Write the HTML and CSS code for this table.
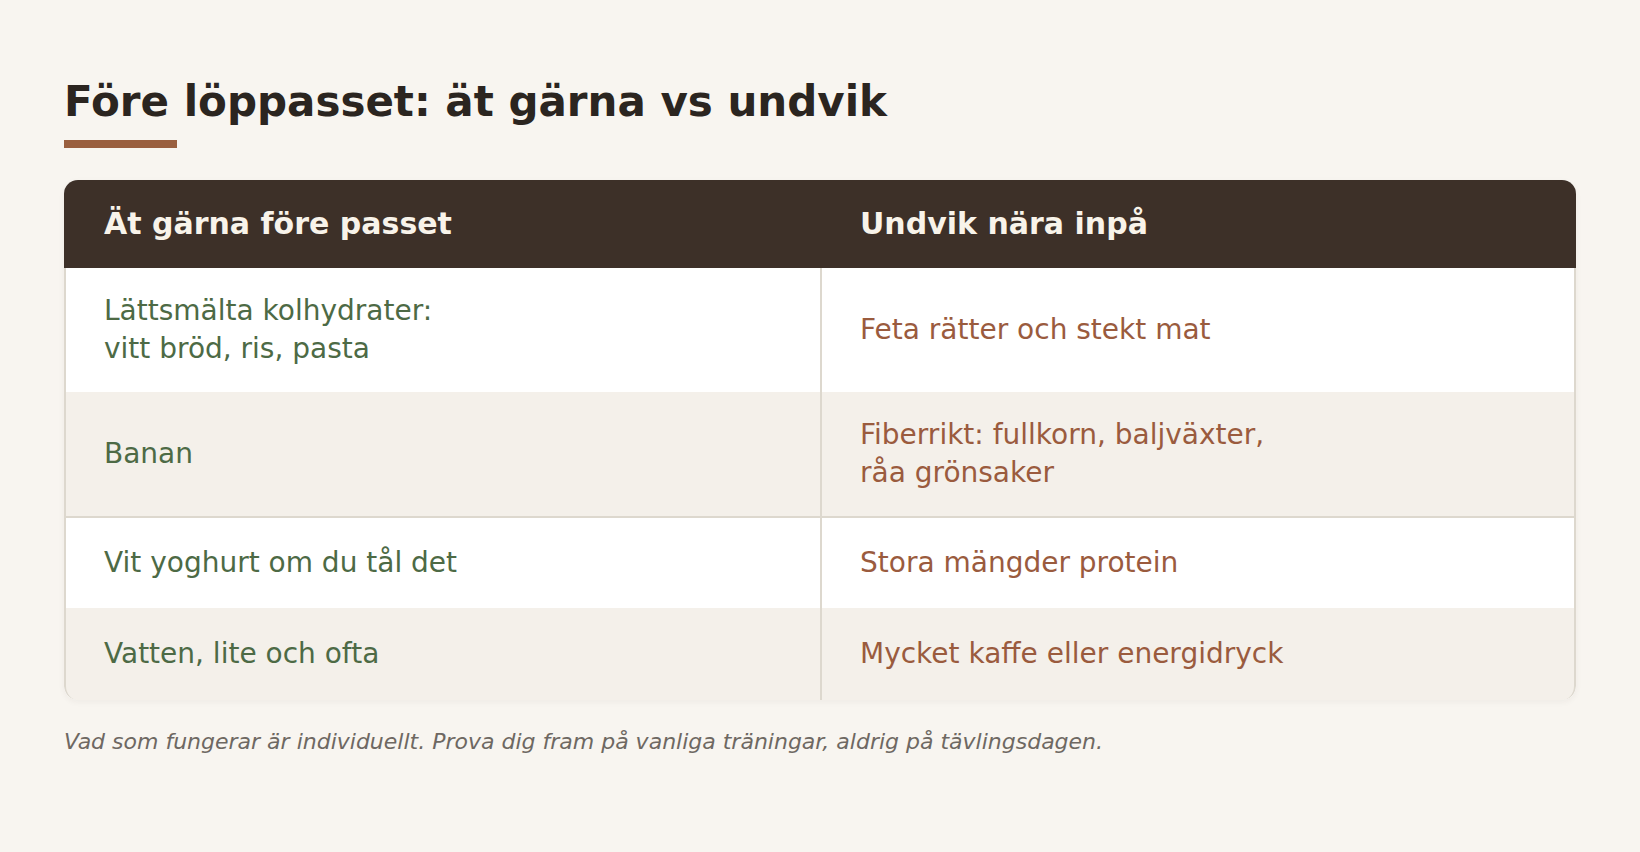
FILE: index.html
```html
<!DOCTYPE html>
<html lang="sv">
<head>
<meta charset="utf-8">
<title>Före löppasset</title>
<link rel="stylesheet" href="styles.css">
</head>
<body>
<main class="page">
  <h1 class="title">Före löppasset: ät gärna vs undvik</h1>
  <div class="accent"></div>
  <div class="table">
    <div class="row head">
      <div class="cell">Ät gärna före passet</div>
      <div class="cell">Undvik nära inpå</div>
    </div>
    <div class="row">
      <div class="cell good">Lättsmälta kolhydrater:<br>vitt bröd, ris, pasta</div>
      <div class="cell bad">Feta rätter och stekt mat</div>
    </div>
    <div class="row alt sep">
      <div class="cell good">Banan</div>
      <div class="cell bad">Fiberrikt: fullkorn, baljväxter,<br>råa grönsaker</div>
    </div>
    <div class="row">
      <div class="cell good">Vit yoghurt om du tål det</div>
      <div class="cell bad">Stora mängder protein</div>
    </div>
    <div class="row alt last">
      <div class="cell good">Vatten, lite och ofta</div>
      <div class="cell bad">Mycket kaffe eller energidryck</div>
    </div>
  </div>
  <p class="note">Vad som fungerar är individuellt. Prova dig fram på vanliga träningar, aldrig på tävlingsdagen.</p>
</main>
</body>
</html>
```

FILE: styles.css
```css
html, body {
  margin: 0;
  padding: 0;
  background: #f8f5f0;
}
body {
  font-family: "DejaVu Sans", "Noto Sans", sans-serif;
  color: #2b2520;
}
.page {
  padding: 77px 64px 0 64px;
}
.title {
  margin: 0;
  font-size: 42px;
  line-height: 50px;
  font-weight: 700;
  color: #2b2520;
}
.accent {
  width: 113px;
  height: 8px;
  background: #9a5f3f;
  margin-top: 13px;
}
.table {
  margin-top: 32px;
  border-radius: 14px;
  overflow: hidden;
  background: #ffffff;
  box-shadow: 0 2px 6px rgba(60, 45, 30, 0.05);
}
.row {
  display: grid;
  grid-template-columns: 1fr 1fr;
  background: #ffffff;
  border-left: 2px solid #ddd8ce;
  border-right: 2px solid #ddd8ce;
}
.row.alt {
  background: #f4f0ea;
}
.row.sep {
  border-bottom: 2px solid #ddd8ce;
}
.row.last {
  border-bottom-left-radius: 14px;
  border-bottom-right-radius: 14px;
}
.cell {
  box-sizing: border-box;
  min-height: 90px;
  padding: 24px 40px 24px 38px;
  font-size: 28px;
  line-height: 38px;
  display: flex;
  flex-direction: column;
  justify-content: center;
}
.row .cell:last-child {
  border-left: 2px solid #ddd8ce;
  padding-left: 38px;
}
.row.last .cell {
  min-height: 92px;
}
.head {
  background: #3d3028;
  border: none;
}
.head .cell {
  min-height: 0;
  padding: 24px 40px;
  font-size: 30px;
  line-height: 40px;
  font-weight: 700;
  color: #f8f3ea;
}
.head .cell:last-child {
  border-left: none;
  padding-left: 40px;
}
.good {
  color: #4d6a45;
}
.bad {
  color: #9a5b3e;
}
.note {
  margin: 27px 0 0 0;
  font-size: 22px;
  line-height: 30px;
  font-style: italic;
  color: #6e6862;
}
```
